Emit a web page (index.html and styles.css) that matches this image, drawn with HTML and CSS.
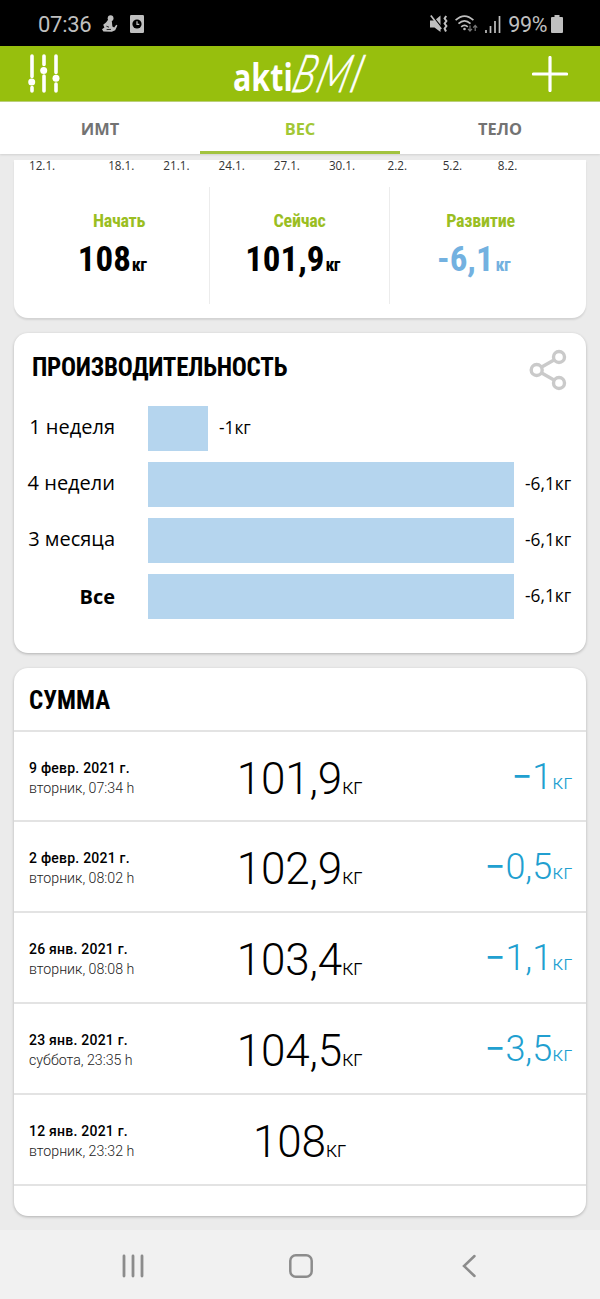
FILE: index.html
```html
<!DOCTYPE html>
<html lang="ru">
<head>
<meta charset="utf-8">
<title>aktiBMI</title>
<link rel="stylesheet" href="styles.css">
</head>
<body>
<div class="status">
  <span class="clock">07:36</span>
  <svg class="st-run" width="16" height="18" viewBox="0 0 16 18"><g fill="#bfbfbf"><circle cx="8.6" cy="3.2" r="2.9"/><path d="M6.3 4.6 9.8 6 10.4 11.5 12.2 12.6 14.2 9.8 15.4 10.6 13.2 15.2 9.8 16.8 1.4 16.6 0 14.2 2.4 12.6 1.2 9.8 4 7.4Z"/></g><path d="M4.4 11.2 7 12.2M4.6 14.6 9 14.4" stroke="#000" stroke-width=".8"/></svg>
  <svg class="st-clock" width="14" height="18" viewBox="0 0 14 18"><rect width="14" height="18" rx="1.2" fill="#bfbfbf"/><circle cx="7" cy="9" r="4.6" fill="#000"/><path d="M7 6.3V9.3H9.3" stroke="#bfbfbf" stroke-width="1.2" fill="none"/></svg>
  <span class="spacer"></span>
  <svg class="st-mute" width="18" height="18" viewBox="0 0 18 18"><path fill="#bfbfbf" d="M0 5.500H4.500L10.500 .5V17L4.500 12.500H0Z"/><path d="M2 .5 13 14" stroke="#000" stroke-width="1.300"/><path d="M.8 .6 11.200 14" stroke="#bfbfbf" stroke-width="1.700"/><path d="M16.200 1 14.600 3.500 16.400 6 14.600 8.500 16.400 11 14.600 13.500 16 16.500" stroke="#bfbfbf" stroke-width="2" fill="none"/></svg>
  <svg class="st-wifi" width="24" height="18" viewBox="0 0 24 18"><g fill="none" stroke="#bfbfbf" stroke-width="1.700"><path d="M.6 5.200Q9.500-3 18.400 5.200"/><path d="M3.500 8.600Q9.500 3 15.500 8.600"/><path d="M6.200 11.800Q9.500 8.800 12.800 11.800"/></g><circle cx="9.500" cy="14" r="1.300" fill="#bfbfbf"/><path d="M15 10.500V16M13 13.800 15 16 17 13.800M20.200 16V10.500M18.200 12.700 20.200 10.500 22.200 12.700" fill="none" stroke="#777" stroke-width="1.200"/></svg>
  <svg class="st-sig" width="16" height="17" viewBox="0 0 16 17"><path d="M1 14V17M5.500 10V17M10 5V17M14.500 0V17" stroke="#bfbfbf" stroke-width="1.700"/></svg>
  <span class="pct">99%</span>
  <svg width="12" height="18" viewBox="0 0 12 18"><path d="M3.500 0H8.500V2H11Q12 2 12 3V17Q12 18 11 18H1Q0 18 0 17V3Q0 2 1 2H3.500Z" fill="#bfbfbf"/></svg>
</div>
<header class="bar">
  <svg width="32" height="40" viewBox="0 0 32 40"><g stroke="#fff" stroke-width="3.600" stroke-linecap="round"><path d="M4 2V22.500M4 33.500V37M16 2V10.500M16 22V37M28 2V18.500M28 30V37"/></g><g fill="#fff"><circle cx="3.700" cy="28" r="3.500"/><circle cx="15.700" cy="16.400" r="3.500"/><circle cx="28" cy="24.300" r="3.500"/></g></svg>
  <div class="logo"><span class="akti">akti</span><span class="bmi"><i>B</i><i>M</i><i>I</i></span></div>
  <svg width="36" height="36" viewBox="0 0 36 36"><path d="M18 1.500V34.500M1.500 18H34.500" stroke="#fff" stroke-width="3.200" stroke-linecap="round"/></svg>
</header>
<nav class="tabs"><div class="tab">ИМТ</div><div class="tab on">ВЕС</div><div class="tab">ТЕЛО</div></nav>
<main>
  <section class="card first">
    <div class="axis"><span>12.1.</span><span class="skip"></span><span>18.1.</span><span>21.1.</span><span>24.1.</span><span>27.1.</span><span>30.1.</span><span>2.2.</span><span>5.2.</span><span>8.2.</span></div>
    <div class="stats">
      <div class="stat"><div class="cap">Начать</div><div class="num"><span class="big">108</span><span class="kg">кг</span></div></div>
      <div class="stat"><div class="cap">Сейчас</div><div class="num"><span class="big">101,9</span><span class="kg">кг</span></div></div>
      <div class="stat blue"><div class="cap">Развитие</div><div class="num"><span class="big">-6,1</span><span class="kg">кг</span></div></div>
    </div>
  </section>
  <section class="card perf">
    <div class="perf-head"><h2>ПРОИЗВОДИТЕЛЬНОСТЬ</h2>
      <svg width="38" height="42" viewBox="0 0 38 42"><g fill="none" stroke="#cacaca" stroke-width="3.400"><circle cx="7.700" cy="21" r="5.500"/><circle cx="30" cy="8" r="5.500"/><circle cx="30" cy="34" r="5.500"/><path d="M12.700 18 25 11M12.700 24 25 31"/></g></svg>
    </div>
    <div class="row"><span class="lab">1 неделя</span><span class="fill" style="width:60px"></span><span class="val">-1кг</span></div>
    <div class="row"><span class="lab">4 недели</span><span class="fill" style="width:366px"></span><span class="val">-6,1кг</span></div>
    <div class="row"><span class="lab">3 месяца</span><span class="fill" style="width:366px"></span><span class="val">-6,1кг</span></div>
    <div class="row"><span class="lab all">Все</span><span class="fill" style="width:366px"></span><span class="val">-6,1кг</span></div>
  </section>
  <section class="card sum">
    <h2>СУММА</h2>
    <div class="entry"><div class="when"><b>9 февр. 2021 г.</b><span>вторник, 07:34 h</span></div><div class="w">101,9<small>кг</small></div><div class="d"><s>−</s>1<small>кг</small></div></div>
    <div class="entry"><div class="when"><b>2 февр. 2021 г.</b><span>вторник, 08:02 h</span></div><div class="w">102,9<small>кг</small></div><div class="d"><s>−</s>0,5<small>кг</small></div></div>
    <div class="entry"><div class="when"><b>26 янв. 2021 г.</b><span>вторник, 08:08 h</span></div><div class="w">103,4<small>кг</small></div><div class="d"><s>−</s>1,1<small>кг</small></div></div>
    <div class="entry"><div class="when"><b>23 янв. 2021 г.</b><span>суббота, 23:35 h</span></div><div class="w">104,5<small>кг</small></div><div class="d"><s>−</s>3,5<small>кг</small></div></div>
    <div class="entry"><div class="when"><b>12 янв. 2021 г.</b><span>вторник, 23:32 h</span></div><div class="w">108<small>кг</small></div><div class="d"></div></div>
  </section>
</main>
<footer class="sys">
  <svg width="24" height="24" viewBox="0 0 24 24"><path d="M3 2V22M12 2V22M21 2V22" stroke="#8c8c8c" stroke-width="2.800" stroke-linecap="round"/></svg>
  <svg width="24" height="24" viewBox="0 0 24 24"><rect x="1.300" y="1.300" width="21.400" height="21.400" rx="5.500" fill="none" stroke="#8c8c8c" stroke-width="2.500"/></svg>
  <svg width="24" height="24" viewBox="0 0 24 24"><path d="M17.500 2 7 12 17.500 22" fill="none" stroke="#8c8c8c" stroke-width="2.500" stroke-linecap="round"/></svg>
</footer>
</body>
</html>
```
FILE: styles.css
```css
* { box-sizing: border-box; }
body { margin: 0; width: 600px; height: 1299px; overflow: hidden; background: #ebebeb; font-family: Roboto, "Liberation Sans", sans-serif; color: #000; display: flex; flex-direction: column; }
svg { display: block; flex: none; }
.status { height: 46px; flex: none; background: #000; color: #bfbfbf; display: flex; align-items: center; padding: 2px 37px 0 38px; font-size: 22px; }
.clock { width: 64px; font-size: 22px; letter-spacing: -.3px; }
.st-clock { margin-left: 12px; }
.spacer { flex: 1; }
.st-wifi { margin-left: 7px; }
.st-sig { margin-left: 6px; }
.pct { margin: 0 4px 0 7px; font-size: 21.500px; letter-spacing: -.4px; }
.bar { height: 56px; flex: none; background: #97bf0d; border-bottom: 1px solid #b9cf75; display: flex; justify-content: space-between; align-items: center; padding: 0 32px 0 28px; }
.logo { width: 134px; height: 46px; display: flex; align-items: flex-end; color: #fff; white-space: nowrap; padding: 0 0 2px 4px; }
.akti { font: 700 38px/38px "Open Sans", sans-serif; width: 56px; flex: none; transform: scaleX(.8); transform-origin: left bottom; }
.bmi { display: flex; gap: 3px; font: 300 52px/46px Lato, sans-serif; height: 42px; align-items: flex-end; -webkit-text-stroke: .8px #fff; transform: skewX(-16deg) scaleX(.72); transform-origin: left bottom; }
.bmi i { font-style: italic; }
.tabs { height: 52px; flex: none; background: #fff; display: grid; grid-template-columns: repeat(3, 1fr); box-shadow: 0 1px 2px #d0d0d0; position: relative; }
.tab { font: 700 16.400px/53px "Open Sans", sans-serif; height: 52px; text-align: center; color: #737373; }
.tab.on { color: #a2c736; border-bottom: 3px solid #a2c33f; }
main { flex: 1; padding: 6px 14px 0; }
.card { background: #fff; border-radius: 14px; box-shadow: 0 1px 3px rgba(0,0,0,.25); width: 572px; margin-bottom: 15px; }
.first { height: 158px; border-radius: 0 0 14px 14px; box-shadow: 0 2px 2px rgba(0,0,0,.1); }
.axis { display: flex; height: 27px; padding-left: .5px; font: 11.700px/10px "Open Sans", sans-serif; color: #333; }
.axis span { width: 55.200px; text-align: center; }
.axis .skip { width: 24px; }
.stats { display: grid; grid-template-columns: 196px 180px 196px; height: 117px; text-align: center; }
.stat { padding: 20px 0 0; }
.stat:first-child, .stat:nth-child(2) { border-right: 1px solid #ececec; }
.stat:first-child { padding-left: 15px; }
.stat.blue { padding-right: 15px; }
.cap { font-size: 18px; letter-spacing: -.25px; line-height: 27px; font-weight: 700; font-stretch: condensed; color: #9abe22; }
.num { font-weight: 700; line-height: 50px; height: 50px; white-space: nowrap; font-stretch: condensed; padding: 1px 14px 0 0; }
.big { font-size: 35px; }
.kg { font-size: 18px; letter-spacing: -.7px; margin-left: 1px; }
.blue .num { color: #73b1e0; }
.blue .kg { margin-left: 2px; }
h2 { margin: 0; font-size: 25px; font-weight: 700; font-stretch: condensed; white-space: nowrap; }
.perf { height: 320px; padding-top: 16px; }
.perf-head { height: 56px; padding: 0 19px 0 18px; display: flex; justify-content: space-between; line-height: 38px; }
.perf h2 { letter-spacing: -.27px; }
.row { display: flex; align-items: center; height: 46px; margin-bottom: 10px; font-family: "Open Sans", sans-serif; }
.lab { width: 101px; margin-right: 33px; text-align: right; font-size: 20px; line-height: 43px; height: 46px; white-space: nowrap; }
.lab.all { font-weight: 700; line-height: 47px; }
.fill { height: 45px; background: #b5d5ee; flex: none; }
.val { font-size: 17.300px; line-height: 46px; height: 46px; margin-left: 11px; white-space: nowrap; }
.sum { height: 548px; margin-bottom: 0; }
.sum h2 { height: 64px; line-height: 66px; padding-left: 15px; border-bottom: 2px solid #e3e3e3; }
.entry { height: 91px; border-bottom: 2px solid #e3e3e3; display: grid; grid-template-columns: 180px 181px 1fr; align-items: center; padding: 0 14px 0 15px; }
.entry:nth-child(2) { height: 90px; }
.when { font-size: 14.200px; line-height: 20px; padding-top: 3px; }
.when b, .when span { display: block; white-space: nowrap; }
.when b { font-size: 14px; font-weight: 500; letter-spacing: .23px; }
.when span { font-weight: 300; color: #222; }
.w { font-size: 44px; font-weight: 300; text-align: center; padding-top: 5px; letter-spacing: -.2px; }
.w small { font-size: 22px; }
.d { font-size: 36px; font-weight: 300; text-align: right; color: #219fd0; white-space: nowrap; padding-top: 1px; }
.d s { text-decoration: none; font-weight: 400; }
.d small { font-size: 21px; }
.sys { height: 69px; flex: none; background: #f1f1f1; display: flex; justify-content: space-between; padding: 24px 119px 0 121px; }
```
